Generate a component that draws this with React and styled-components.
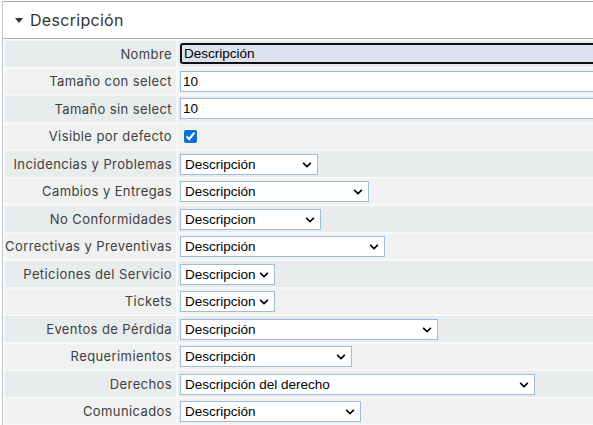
import React from "react";
import styled, { createGlobalStyle } from "styled-components";
import { FaChevronDown } from "react-icons/fa";

const GlobalStyle = createGlobalStyle`
  html, body {
    margin: 0;
    padding: 0;
    background: #ffffff;
    overflow: hidden;
  }
`;

const Panel = styled.div`
  width: 900px;
  margin: 1px 0 0 2px;
  border-left: 1px solid #bfc8d3;
  font-family: Inter, "Open Sans", sans-serif;
`;

const Header = styled.div`
  height: 36px;
  display: flex;
  align-items: center;
  gap: 7px;
  padding-left: 12px;
  background: #ffffff;
  border-top: 1px solid #ababab;
  border-bottom: 1px solid #b0b0b0;
  color: #333333;
  font-size: 16px;
  letter-spacing: 0.3px;
`;

const Caret = styled.span`
  width: 0;
  height: 0;
  border-left: 4px solid transparent;
  border-right: 4px solid transparent;
  border-top: 5px solid #333333;
  margin-top: 1px;
`;

const Table = styled.table`
  width: 100%;
  border-collapse: separate;
  border-spacing: 2px;
  background: #f8f8f8;
`;

const Row = styled.tr`
  background: ${(props) => (props.$odd ? "#e9ecec" : "#f0f1f1")};
`;

const Label = styled.td`
  width: 167px;
  height: 25.5px;
  padding: 0 4px 0 0;
  text-align: right;
  font-size: 13px;
  line-height: 16px;
  letter-spacing: 0.4px;
  color: #404040;
  white-space: nowrap;
  background: inherit;
`;

const Value = styled.td`
  padding: 0 0 0 2px;
  background: inherit;
`;

const TextInput = styled.input`
  box-sizing: border-box;
  width: 640px;
  height: 21px;
  padding: 0 2px;
  font-family: "Liberation Sans", Arial, sans-serif;
  font-size: 13.5px;
  line-height: 15px;
  color: #000000;
  background: ${(props) => (props.$focused ? "#dde3ee" : "#ffffff")};
  border: ${(props) =>
    props.$focused ? "2px solid #111111" : "1px solid #9dbde0"};
  border-radius: ${(props) => (props.$focused ? "3px" : "0")};
  outline: none;
  display: block;
`;

const Check = styled.input`
  display: block;
  width: 13px;
  height: 13px;
  margin: 0 0 0 4px;
  accent-color: #0b6fd8;
`;

const SelectWrap = styled.div`
  position: relative;
  display: inline-block;
  vertical-align: middle;
`;

const Select = styled.select`
  box-sizing: border-box;
  appearance: none;
  height: 21px;
  padding: 0 16px 0 4px;
  font-family: "Liberation Sans", Arial, sans-serif;
  font-size: 13.5px;
  line-height: 15px;
  color: #000000;
  background: #ffffff;
  border: 1px solid #9dbde0;
  border-radius: 0;
  outline: none;
  display: block;
`;

const Chevron = styled(FaChevronDown)`
  position: absolute;
  right: 6px;
  top: 6px;
  width: 10px;
  height: 10px;
  color: #000000;
  pointer-events: none;
`;

const selects = [
  ["Incidencias y Problemas", "Descripción", 138],
  ["Cambios y Entregas", "Descripción", 189],
  ["No Conformidades", "Descripcion", 141],
  ["Correctivas y Preventivas", "Descripción", 205],
  ["Peticiones del Servicio", "Descripcion", 95],
  ["Tickets", "Descripcion", 95],
  ["Eventos de Pérdida", "Descripción", 258],
  ["Requerimientos", "Descripción", 172],
  ["Derechos", "Descripción del derecho", 355],
  ["Comunicados", "Descripción", 181],
];

function SelectField({ value, width }) {
  return (
    <SelectWrap>
      <Select value={value} style={{ width }} onChange={() => {}}>
        <option>{value}</option>
      </Select>
      <Chevron />
    </SelectWrap>
  );
}

export default function App() {
  return (
    <>
      <GlobalStyle />
      <Panel>
        <Header>
          <Caret />
          <span>Descripción</span>
        </Header>
        <Table>
          <tbody>
            <Row $odd>
              <Label>Nombre</Label>
              <Value>
                <TextInput $focused defaultValue="Descripción" />
              </Value>
            </Row>
            <Row>
              <Label>Tamaño con select</Label>
              <Value>
                <TextInput defaultValue="10" />
              </Value>
            </Row>
            <Row $odd>
              <Label>Tamaño sin select</Label>
              <Value>
                <TextInput defaultValue="10" />
              </Value>
            </Row>
            <Row>
              <Label>Visible por defecto</Label>
              <Value>
                <Check type="checkbox" defaultChecked />
              </Value>
            </Row>
            {selects.map(([label, value, width], i) => (
              <Row key={label} $odd={i % 2 === 0}>
                <Label>{label}</Label>
                <Value>
                  <SelectField value={value} width={width} />
                </Value>
              </Row>
            ))}
          </tbody>
        </Table>
      </Panel>
    </>
  );
}
